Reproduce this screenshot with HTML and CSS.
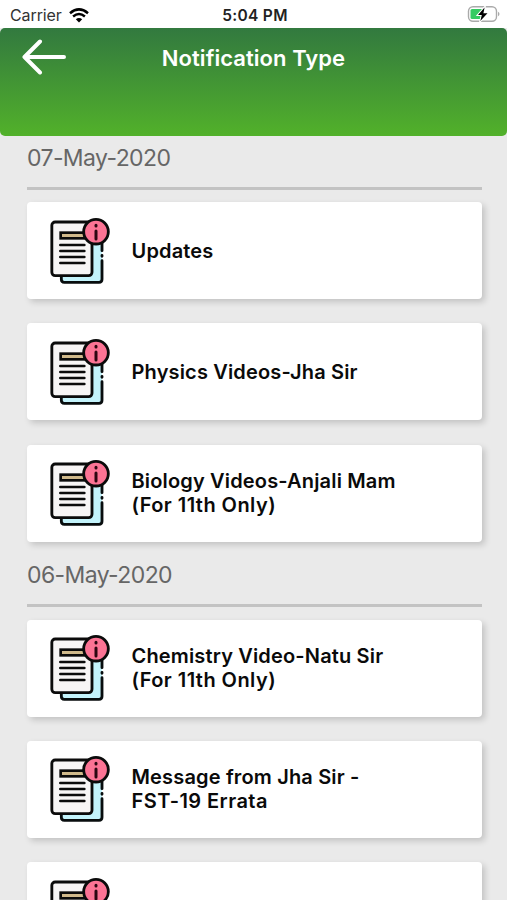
FILE: index.html
```html
<!DOCTYPE html>
<html lang="en">
<head>
<meta charset="utf-8">
<title>Notification Type</title>
<link rel="stylesheet" href="styles.css">
</head>
<body>
<svg class="defs" aria-hidden="true">
  <symbol id="doc" viewBox="0 0 240 270">
    <path d="M64 208V220Q64 229 73 229H177Q186 229 186 220V110H155V208Z" fill="#c3f3fb"/>
    <path d="M64 210V220Q64 229 73 229H177Q186 229 186 220V164M186 112V134M186 148V151" fill="none" stroke="#080d0e" stroke-width="8.5" stroke-linecap="round"/>
    <rect x="35.500" y="48" width="120.500" height="161" rx="10" fill="#f7f5f5" stroke="#0b0b0b" stroke-width="8.500"/>
    <rect x="62" y="80" width="78" height="17" fill="#d0b98b" stroke="#0b0b0b" stroke-width="8"/>
    <path d="M61 117H133M61 135H133M61 153H133M61 171H133" stroke="#0b0b0b" stroke-width="8" stroke-linecap="round"/>
    <circle cx="168" cy="77" r="37" fill="#fb7394" stroke="#0b0b0b" stroke-width="8.500"/>
    <path d="M168 75V99M168 58V60" stroke="#2c0711" stroke-width="9" stroke-linecap="round"/>
  </symbol>
</svg>
<div class="status">
  <div class="carrier"><span>Carrier</span>
    <svg class="wifi" viewBox="0 0 20 15"><g fill="none" stroke="#000" stroke-width="2.5"><path d="M1 5.2Q10-2.4 19 5.2"/><path d="M4.1 8.5Q10 3.6 15.9 8.5"/></g><path d="M6.8 11.2Q10 8.6 13.2 11.2L10 14.5Z"/></svg>
  </div>
  <div class="time">5:04 PM</div>
  <svg class="battery" viewBox="0 0 34 18"><rect x="2.500" y="1.700" width="28" height="14.600" rx="4.500" fill="#fff" stroke="#aaa" stroke-width="1.400"/><path d="M6 3.900H17V14.100H6Q4.500 14.100 4.500 12.500V5.500Q4.500 3.900 6 3.900Z" fill="#35cb62"/><path d="M32 6.800Q33.500 7.500 33.500 9T32 11.200Z" fill="#aaa"/><path d="M18.600 2.500L12 10H15.800L14.300 16L21.500 8.300H17.400Z" fill="#000" stroke="#fff" stroke-width="2" paint-order="stroke"/></svg>
</div>
<header class="bar">
  <svg class="back" viewBox="0 0 46 36"><path d="M43 18H3.500M19 2.500L3.500 18L19 33.500" fill="none" stroke="#fff" stroke-width="4" stroke-linecap="round" stroke-linejoin="round"/></svg>
  <h1>Notification Type</h1>
</header>
<main>
  <section>
    <h2 class="first"><span>07-May-2020</span></h2>
    <article class="card"><svg class="icon"><use href="#doc"/></svg><p>Updates</p></article>
    <article class="card"><svg class="icon"><use href="#doc"/></svg><p>Physics Videos-Jha Sir</p></article>
    <article class="card"><svg class="icon"><use href="#doc"/></svg><p>Biology Videos-Anjali Mam<br><span class="wide">(For 11th Only)</span></p></article>
  </section>
  <section>
    <h2><span>06-May-2020</span></h2>
    <article class="card"><svg class="icon"><use href="#doc"/></svg><p>Chemistry Video-Natu Sir<br><span class="wide">(For 11th Only)</span></p></article>
    <article class="card"><svg class="icon"><use href="#doc"/></svg><p>Message from Jha Sir -<br><span class="wide">FST-19 Errata</span></p></article>
    <article class="card"><svg class="icon"><use href="#doc"/></svg></article>
  </section>
</main>
</body>
</html>
```
FILE: styles.css
```css
* { box-sizing: border-box; }
body {
  margin: 0;
  height: 900px;
  overflow: hidden;
  display: flex;
  flex-direction: column;
  background: #eaeaea;
  font-family: Inter, "Liberation Sans", sans-serif;
}
.defs { position: absolute; width: 0; height: 0; }
.status {
  flex: none;
  display: grid;
  grid-template-columns: 1fr auto 1fr;
  align-items: center;
  height: 28px;
  padding: 2px 7px 0 10px;
  background: #fff;
  font-size: 16px;
  color: #333;
}
.carrier { display: flex; align-items: center; gap: 7px; letter-spacing: -.1px; }
.wifi { width: 20px; height: 15px; }
.time { font-size: 15.5px; font-weight: 600; letter-spacing: .3px; color: #222; }
.battery { width: 34px; height: 18px; justify-self: end; margin-top: -2px; }
.bar {
  flex: none;
  display: grid;
  grid-template-columns: 66px 1fr 66px;
  align-items: start;
  height: 107.5px;
  border-radius: 5px;
  background: linear-gradient(#32793f, #52b12a);
}
.back { width: 46px; height: 36px; margin: 11px 0 0 21px; }
h1 {
  margin: 15px 0 0;
  text-align: center;
  font-size: 22px;
  line-height: 30px;
  font-weight: 600;
  letter-spacing: .05px;
  color: #fff;
}
main { flex: 1; min-height: 0; overflow: hidden; padding: 0 25px 0 27px; }
h2 {
  display: flex;
  flex-direction: column;
  justify-content: flex-end;
  height: 78px;
  margin: 0;
  padding-bottom: 12.5px;
  font-size: 23px;
  line-height: 30px;
  font-weight: 400;
  letter-spacing: -.6px;
  color: #666;
}
h2::after { content: ""; height: 3px; margin-top: 14px; background: #c3c3c3; }
.first { height: 66.5px; }
.card {
  display: flex;
  align-items: center;
  height: 97px;
  padding-left: 13px;
  border-radius: 4px;
  background: #fff;
  box-shadow: 3px 3px 6px rgba(0, 0, 0, .17);
}
.card + .card { margin-top: 24.3px; }
.icon { flex: none; width: 80px; height: 90px; }
.card p {
  margin: 0 0 0 11.5px;
  font-size: 20px;
  line-height: 24px;
  font-weight: 600;
  letter-spacing: .16px;
  color: #0a0a0a;
}
.card .wide { letter-spacing: .45px; }
```
